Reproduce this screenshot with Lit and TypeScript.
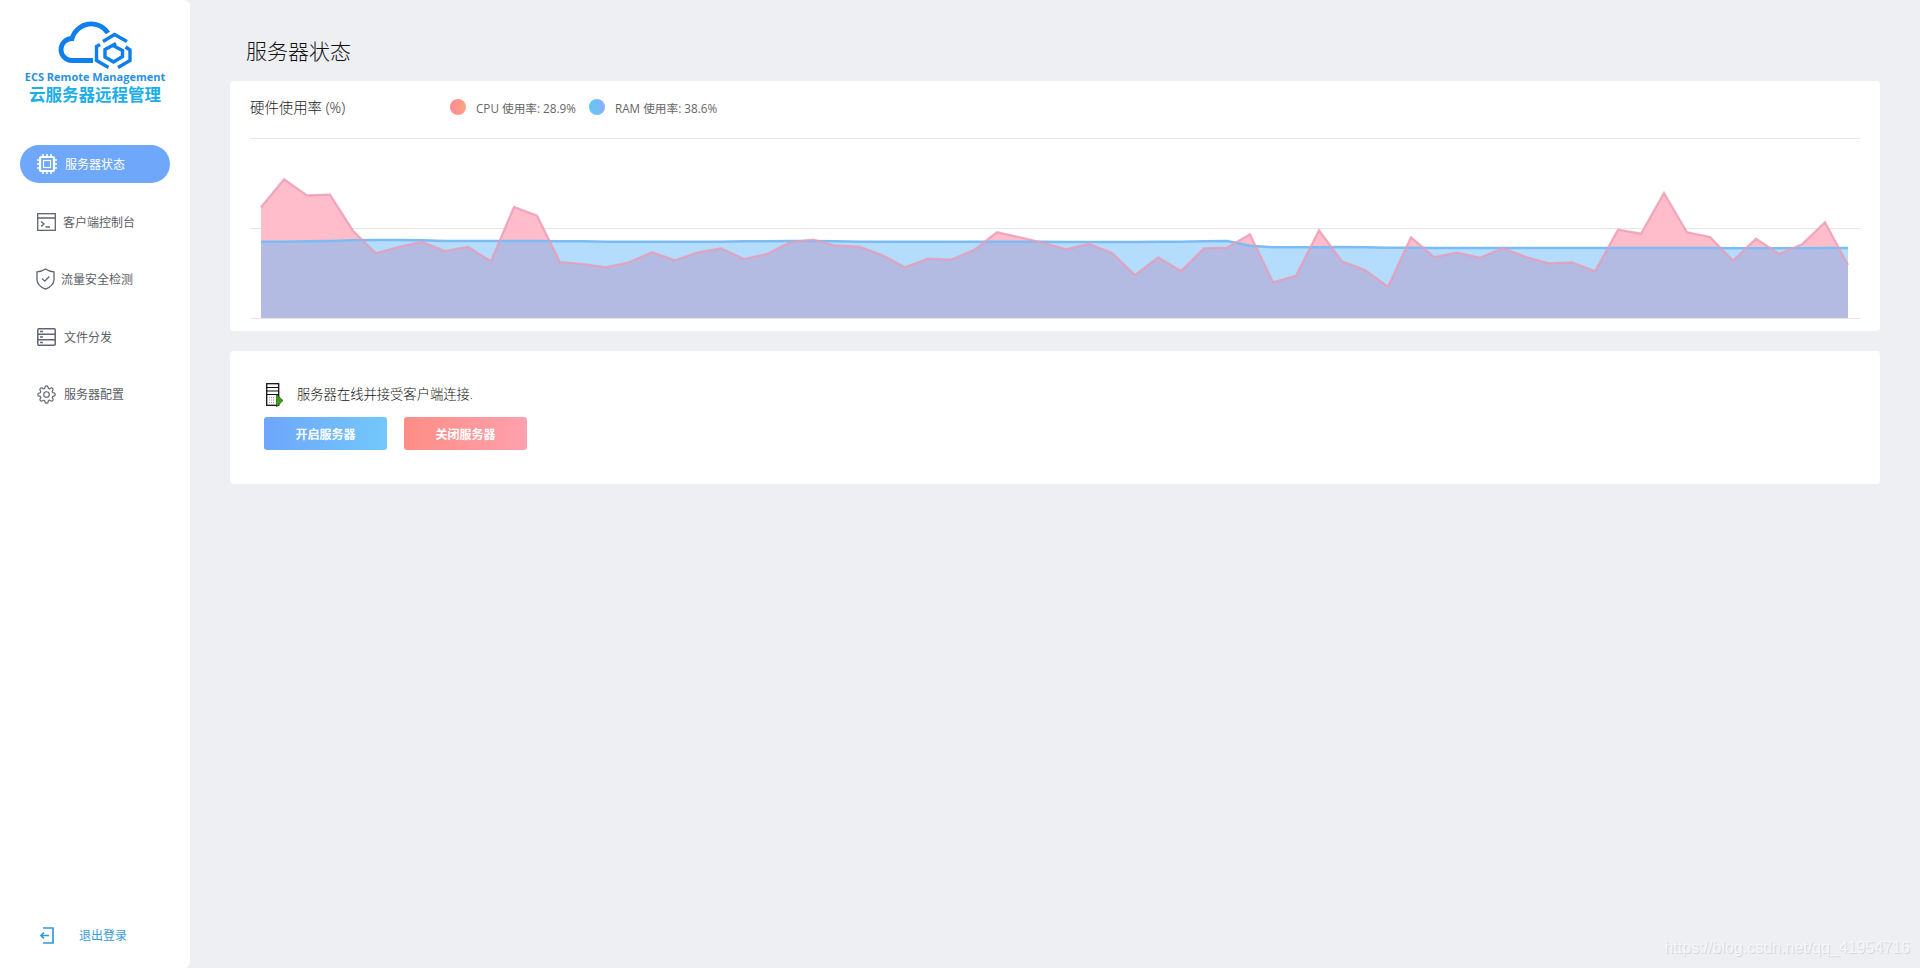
import { LitElement, html, css, svg } from "lit";
import { customElement } from "lit/decorators.js";

const X0 = 261;
const STEP = 23;
const toY = (z: number) => 130 + z / 3;
const cpuZ = [232,148,196,194,302,370,350,336,363,351,394,231,257,396,402,412,397,367,391,367,355,387,372,337,329,347,350,375,412,386,389,360,307,322,338,358,342,369,435,382,423,355,353,313,457,437,301,394,420,470,322,381,368,383,355,381,400,397,424,299,311,189,307,321,392,326,372,343,277,405];
const ramZ = [335,335,334,333,331,330,330,331,333,333,333,333,333,334,334,335,335,335,335,335,335,334,334,333,333,334,335,335,335,335,335,335,335,335,335,336,336,336,336,335,335,334,333,347,352,352,352,351,352,353,353,354,354,354,354,354,354,354,354,354,354,354,354,354,355,355,355,355,354,354];
const BASE = 318;
const line = (arr: number[]) => arr.map((z, i) => `${X0 + i * STEP},${toY(z).toFixed(1)}`).join(" ");
const area = (arr: number[]) => `${X0},${BASE} ${line(arr)} ${X0 + (arr.length - 1) * STEP},${BASE}`;

const icons: Record<string, unknown> = {
  chip: svg`<svg class="ic" width="20" height="20" viewBox="0 0 20 20" fill="none" stroke="#fff"><rect x="3" y="3" width="14" height="14" rx="1.500" stroke-width="2.200"/><rect x="6.500" y="6.500" width="7" height="7" stroke-width="1.200"/><path d="M6 0v2.500M10 0v2.500M14 0v2.500M6 17.500V20M10 17.500V20M14 17.500V20M0 6h2.500M0 10h2.500M0 14h2.500M17.500 6H20M17.500 10H20M17.500 14H20" stroke-width="1.600"/></svg>`,
  term: svg`<svg class="ic" width="19" height="18" viewBox="0 0 19 18" fill="none" stroke="#5f6470" stroke-width="1.300"><rect x=".7" y=".7" width="17.600" height="16.600"/><path d="M.7 5h17.600M4 8.500l3 2.500-3 2.500M8.500 14h4.500"/></svg>`,
  shield: svg`<svg class="ic" width="19" height="22" viewBox="0 0 19 22" fill="none" stroke="#5f6470" stroke-width="1.300"><path d="M9.500 1C7 2.800 4 3.600 1 3.800v8c0 4.500 4 7.500 8.500 9.400 4.500-1.900 8.500-4.900 8.500-9.400v-8C15 3.600 12 2.800 9.500 1z"/><path d="M6 10.500l2.800 2.700 4.500-4.700"/></svg>`,
  list: svg`<svg class="ic" width="19" height="18" viewBox="0 0 19 18" fill="none" stroke="#5f6470" stroke-width="1.500"><rect x=".8" y=".8" width="17.400" height="16.400" rx="1"/><path d="M.8 6.200h17.400M.8 11.800h17.400M3 3.500h3M3 9h3M3 14.500h3"/></svg>`,
  gear: svg`<svg class="ic" width="19" height="19" viewBox="0 0 24 24" fill="none" stroke="#5f6470" stroke-width="1.500"><circle cx="12" cy="12" r="3.500"/><path d="M19.400 15a1.650 1.650 0 0 0 .33 1.820l.06.06a2 2 0 0 1 0 2.830 2 2 0 0 1-2.830 0l-.06-.06a1.650 1.650 0 0 0-1.820-.33 1.650 1.650 0 0 0-1 1.510V21a2 2 0 0 1-2 2 2 2 0 0 1-2-2v-.09A1.650 1.650 0 0 0 9 19.400a1.650 1.650 0 0 0-1.820.33l-.06.06a2 2 0 0 1-2.830 0 2 2 0 0 1 0-2.830l.06-.06a1.650 1.650 0 0 0 .33-1.820 1.650 1.650 0 0 0-1.510-1H3a2 2 0 0 1-2-2 2 2 0 0 1 2-2h.09A1.650 1.650 0 0 0 4.600 9a1.650 1.650 0 0 0-.33-1.820l-.06-.06a2 2 0 0 1 0-2.830 2 2 0 0 1 2.830 0l.06.06a1.650 1.650 0 0 0 1.820.33H9a1.650 1.650 0 0 0 1-1.510V3a2 2 0 0 1 2-2 2 2 0 0 1 2 2v.09a1.650 1.650 0 0 0 1 1.510 1.650 1.650 0 0 0 1.820-.33l.06-.06a2 2 0 0 1 2.830 0 2 2 0 0 1 0 2.830l-.06.06a1.650 1.650 0 0 0-.33 1.820V9a1.650 1.650 0 0 0 1.510 1H21a2 2 0 0 1 2 2 2 2 0 0 1-2 2h-.09a1.650 1.650 0 0 0-1.510 1z"/></svg>`,
};

const nav = [
  { icon: "chip", label: "服务器状态", left: 17, gap: 8, active: true },
  { icon: "term", label: "客户端控制台", left: 17, gap: 7, active: false },
  { icon: "shield", label: "流量安全检测", left: 16, gap: 6, active: false },
  { icon: "list", label: "文件分发", left: 17, gap: 8, active: false },
  { icon: "gear", label: "服务器配置", left: 17, gap: 8, active: false },
];

@customElement("app-root")
export class AppRoot extends LitElement {
  static styles = css`
    :host {
      display: flex;
      min-height: 968px;
      background: #edeff3;
      font-family: "Open Sans", "Noto Sans CJK SC", sans-serif;
      color: #333;
      position: relative;
    }
    .side {
      width: 190px;
      flex: none;
      height: 968px;
      box-sizing: border-box;
      background: #fff;
      border-radius: 0 6px 6px 0;
      display: flex;
      flex-direction: column;
    }
    .logo {
      display: flex;
      flex-direction: column;
      align-items: center;
      padding-top: 15px;
      height: 130px;
      box-sizing: border-box;
    }
    .logo svg { display: block; }
    .en {
      font-size: 11px;
      font-weight: 700;
      line-height: 15px;
      color: #2b8fe3;
      white-space: nowrap;
    }
    .cn {
      font-size: 16.500px;
      font-weight: 700;
      line-height: 21px;
      color: #1aaeea;
      white-space: nowrap;
      font-family: "Noto Sans CJK SC", sans-serif;
    }
    nav {
      margin: 15px 20px 0;
      display: flex;
      flex-direction: column;
      gap: 19.500px;
    }
    .item {
      height: 38px;
      display: flex;
      align-items: center;
      border-radius: 19px;
      font-size: 12px;
      color: #5a5e66;
      white-space: nowrap;
    }
    .item.active {
      background: #6fa7fb;
      color: #fff;
    }
    .ic { display: block; flex: none; }
    .logout {
      margin: auto 0 23px 40px;
      height: 20px;
      display: flex;
      align-items: center;
      gap: 25px;
      font-size: 12px;
      color: #3a9bd6;
    }
    main {
      flex: 1;
      padding: 0 40px;
      display: flex;
      flex-direction: column;
    }
    h1 {
      margin: 0;
      height: 81px;
      box-sizing: border-box;
      padding: 36px 0 0 16px;
      font-size: 21px;
      line-height: 30px;
      font-weight: 300;
      color: #111;
    }
    .card {
      background: #fff;
      border-radius: 4px;
    }
    .usage { height: 250px; }
    .head {
      height: 52px;
      padding-left: 20px;
      display: flex;
      align-items: center;
      font-size: 14.400px;
      font-weight: 300;
      color: #222;
    }
    .head .title { width: 200px; margin-top: -2px; }
    .legend {
      display: flex;
      align-items: center;
      font-size: 11.700px;
      font-weight: 400;
      color: #666;
    }
    .dot {
      width: 16px;
      height: 16px;
      border-radius: 50%;
      margin-right: 10px;
    }
    .dot.cpu { background: linear-gradient(90deg, #fd8a98, #ffa37c); }
    .dot.ram { background: linear-gradient(90deg, #5cc9f5, #8eb0f8); }
    .legend span.txt { width: 113px; white-space: nowrap; }
    .chart { display: block; }
    .ctrl {
      margin-top: 20px;
      height: 133px;
      box-sizing: border-box;
      padding: 32px 34px 0;
    }
    .status {
      height: 24px;
      display: flex;
      align-items: center;
      gap: 14px;
      font-size: 13.300px;
      font-weight: 300;
      color: #111;
      padding-left: 2px;
    }
    .status span { margin-top: -4px; }
    .btns {
      margin-top: 10px;
      display: flex;
      gap: 17px;
    }
    .btn {
      width: 123px;
      height: 33px;
      border-radius: 3px;
      color: #fff;
      font-size: 12px;
      font-weight: 700;
      display: flex;
      align-items: center;
      justify-content: center;
    }
    .btn.on { background: linear-gradient(90deg, #6ea6fb, #72c8fb); }
    .btn.off { background: linear-gradient(90deg, #fd8e85, #fea0ae); }
    .mark {
      position: absolute;
      right: 10px;
      top: 938px;
      font: 16px/20px "Liberation Sans", sans-serif;
      color: #f6f7f9;
      text-shadow: 1px 1px 0 #d5d7db;
      white-space: nowrap;
    }
  `;

  render() {
    return html`
      <aside class="side">
        <div class="logo">
          <svg width="90" height="54" viewBox="50 15 90 54" fill="none">
            <path d="M93 60.500H72A11 11 0 0 1 72 38.500A20 20 0 0 1 108 33" stroke="#0f7fee" stroke-width="4.800"/>
            <g stroke="#0f7fee" stroke-width="3.400" stroke-linejoin="miter">
              <path d="M103 41.500L114.500 34.500L127 41.500"/>
              <path d="M100 44.500L96.500 46.500V60.500L108.500 67.500"/>
              <path d="M118 67.500L130 60.500V50L125.500 47"/>
              <path d="M116 43.500L105 49.500V57L113.500 62L122.500 56.500V50.500L113 45.500"/>
            </g>
          </svg>
          <div class="en">ECS Remote Management</div>
          <div class="cn">云服务器远程管理</div>
        </div>
        <nav>
          ${nav.map(
            (n) => html`<div class="item ${n.active ? "active" : ""}" style="padding-left:${n.left}px;gap:${n.gap}px">
              ${icons[n.icon]}<span>${n.label}</span>
            </div>`
          )}
        </nav>
        <div class="logout">
          <svg class="ic" width="14" height="17" viewBox="0 0 14 17" fill="none" stroke="#2f9bd9" stroke-width="1.700"><path d="M3 1h10v15H3M9 8.500H1M4 5.500L1 8.500l3 3"/></svg>
          <span>退出登录</span>
        </div>
      </aside>
      <main>
        <h1>服务器状态</h1>
        <section class="card usage">
          <div class="head">
            <div class="title">硬件使用率 (%)</div>
            <div class="legend">
              <i class="dot cpu"></i><span class="txt">CPU 使用率: 28.9%</span>
              <i class="dot ram"></i><span class="txt">RAM 使用率: 38.6%</span>
            </div>
          </div>
          <svg class="chart" width="1650" height="198" viewBox="230 133 1650 198">
            <path d="M250 138.500H1860M250 228.500H1860M250 318.500H1860" stroke="#e6e6e8" stroke-width="1" fill="none"/>
            <polygon points=${area(cpuZ)} fill="#ffbccb"/>
            <polygon points=${area(ramZ)} fill="rgba(105,185,250,.5)"/>
            <polyline points=${line(ramZ)} fill="none" stroke="#7cbcf5" stroke-width="2.400"/>
            <polyline points=${line(cpuZ)} fill="none" stroke="#eb9ab4" stroke-width="2.200" stroke-opacity=".8"/>
          </svg>
        </section>
        <section class="card ctrl">
          <div class="status">
            <svg class="ic" width="17" height="24" viewBox="0 0 17 24" fill="none">
              <rect x=".7" y=".7" width="12" height="21.600" fill="#fff" stroke="#111" stroke-width="1.300"/>
              <path d="M.7 4.500h12M.7 8h12M.7 11.500h12" stroke="#111" stroke-width="1.200"/>
              <path d="M3 14.500h5M3 17h5M3 19.500h5" stroke="#999" stroke-width="1" stroke-dasharray="1 1"/>
              <path d="M10.500 11.500L17 17.500L10.500 24z" fill="#3f9c1a" stroke="#14400a" stroke-width=".6"/>
            </svg>
            <span>服务器在线并接受客户端连接.</span>
          </div>
          <div class="btns">
            <div class="btn on">开启服务器</div>
            <div class="btn off">关闭服务器</div>
          </div>
        </section>
      </main>
      <div class="mark">https://blog.csdn.net/qq_41954716</div>
    `;
  }
}
